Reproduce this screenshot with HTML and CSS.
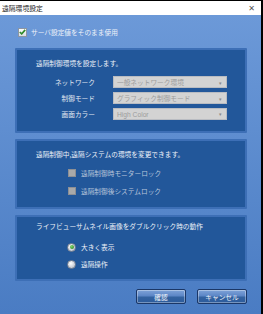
FILE: index.html
```html
<!DOCTYPE html>
<html>
<head>
    <meta charset="utf-8">
    <title>遠隔環境設定</title>
    <link rel="stylesheet" href="styles.css">
</head>
<body>
    <!-- remote environment settings dialog -->
    <div class="window">
        <div class="titlebar">
            <span class="title">遠隔環境設定</span>
            <span class="close">✕</span>
        </div>
        <div class="content">
            <div class="server-row">
                <span class="check">
                    <svg width="7" height="6" viewBox="0 0 7 6"><path d="M0.8 3 L2.7 4.9 L6.2 0.9" fill="none" stroke="#2f8a2a" stroke-width="1.6"/></svg>
                </span>
                <span>サーバ設定値をそのまま使用</span>
            </div>

            <div class="panel p1">
                <div class="lead">遠隔制御環境を設定します。</div>
                <div class="form-grid">
                    <span class="label">ネットワーク</span>
                    <div class="select"><span>一般ネットワーク環境</span><span class="arrow">▾</span></div>
                    <span class="label">制御モード</span>
                    <div class="select"><span>グラフィック制御モード</span><span class="arrow">▾</span></div>
                    <span class="label">画面カラー</span>
                    <div class="select latin"><span>High Color</span><span class="arrow">▾</span></div>
                </div>
            </div>

            <div class="panel p2">
                <div class="lead">遠隔制御中,遠隔システムの環境を変更できます。</div>
                <div class="opts">
                    <div class="opt dim"><span class="box"></span>遠隔制御時モニターロック</div>
                    <div class="opt dim"><span class="box"></span>遠隔制御後システムロック</div>
                </div>
            </div>

            <div class="panel p3">
                <div class="lead">ライフビューサムネイル画像をダブルクリック時の動作</div>
                <div class="opts radios">
                    <div class="opt"><span class="radio sel"></span>大きく表示</div>
                    <div class="opt"><span class="radio"></span>遠隔操作</div>
                </div>
            </div>

            <div class="buttons">
                <div class="btn">確認</div>
                <div class="btn">キャンセル</div>
            </div>
        </div>
    </div>
</body>
</html>
```
FILE: styles.css
```css
body { margin: 0; font-family: "Noto Sans CJK JP", "Noto Sans", sans-serif; font-size: 6.7px; }
.window { width: 261px; height: 313px; border-top: 1px solid #000; border-right: 2px solid #000; border-bottom: 1px solid #000; display: flex; flex-direction: column; }
.titlebar { height: 14px; background: #fff; display: flex; align-items: center; justify-content: space-between; padding: 0 6px 0 2px; color: #222; }
.title { font-size: 6.8px; }
.close { font-size: 8px; color: #555; font-family: "DejaVu Sans", sans-serif; }
.content { flex: 1; background: linear-gradient(#6c99d8, #4a7cc3); padding: 0 14px 0 15px; display: flex; flex-direction: column; color: #eef2f9; }
.server-row { height: 33px; display: flex; align-items: center; gap: 4px; padding-left: 3px; padding-top: 1px; box-sizing: border-box; }
.check { width: 9px; height: 9px; background: linear-gradient(#fdfdfd, #d9dde3); border: 1px solid #8c95a2; display: flex; align-items: center; justify-content: center; box-sizing: border-box; }
.panel { background: #22579a; border: 2px solid #3d6fb6; border-radius: 1px; padding: 0 0 0 19px; box-sizing: border-box; }
.lead { line-height: 12px; }
.p1 { height: 85px; padding-top: 7px; }
.form-grid { display: grid; grid-template-columns: 59px 114px; grid-auto-rows: 12px; column-gap: 18px; row-gap: 4px; margin-top: 7px; }
.label { text-align: right; line-height: 12px; color: #e2e8f2; }
.select { background: #d3d3d3; border: 1px solid #b9bcc2; color: #9c9c9c; display: flex; justify-content: space-between; align-items: center; padding: 0 4px 0 3px; box-sizing: border-box; }
.select.latin { font-family: "Liberation Sans", sans-serif; }
.arrow { font-size: 5px; color: #8a8a8a; }
.p2 { height: 70px; margin-top: 6px; padding-top: 7px; }
.p3 { height: 66px; margin-top: 6px; padding-top: 3px; }
.opts { display: flex; flex-direction: column; gap: 6px; margin-top: 7px; padding-left: 32px; }
.opt { height: 12px; display: flex; align-items: center; gap: 5px; }
.opt.dim { color: #b9c6da; }
.box { width: 8px; height: 8px; background: #a9a9a9; border: 1px solid #8d8f94; box-sizing: border-box; }
.radios { gap: 5px; margin-top: 9px; padding-left: 31px; }
.radio { width: 9px; height: 9px; border-radius: 50%; background: radial-gradient(circle at 40% 35%, #ffffff, #c4c9d2 70%, #9aa1ad); border: 1px solid #7b8494; box-sizing: border-box; display: flex; align-items: center; justify-content: center; }
.radio.sel::after { content: ""; width: 4px; height: 4px; border-radius: 50%; background: radial-gradient(circle at 40% 35%, #7ed36a, #1f7d19); }
.buttons { display: flex; justify-content: flex-end; gap: 11px; margin-top: 8px; }
.btn { width: 50px; height: 15px; box-sizing: border-box; border: 1px solid #1b3767; border-radius: 2px; background: linear-gradient(#7fa3d8 0%, #5c86c6 45%, #33629f 55%, #2c5b9c 100%); box-shadow: inset 0 0 0 1px rgba(255,255,255,0.35); color: #f2f5fb; display: flex; align-items: center; justify-content: center; }
```
